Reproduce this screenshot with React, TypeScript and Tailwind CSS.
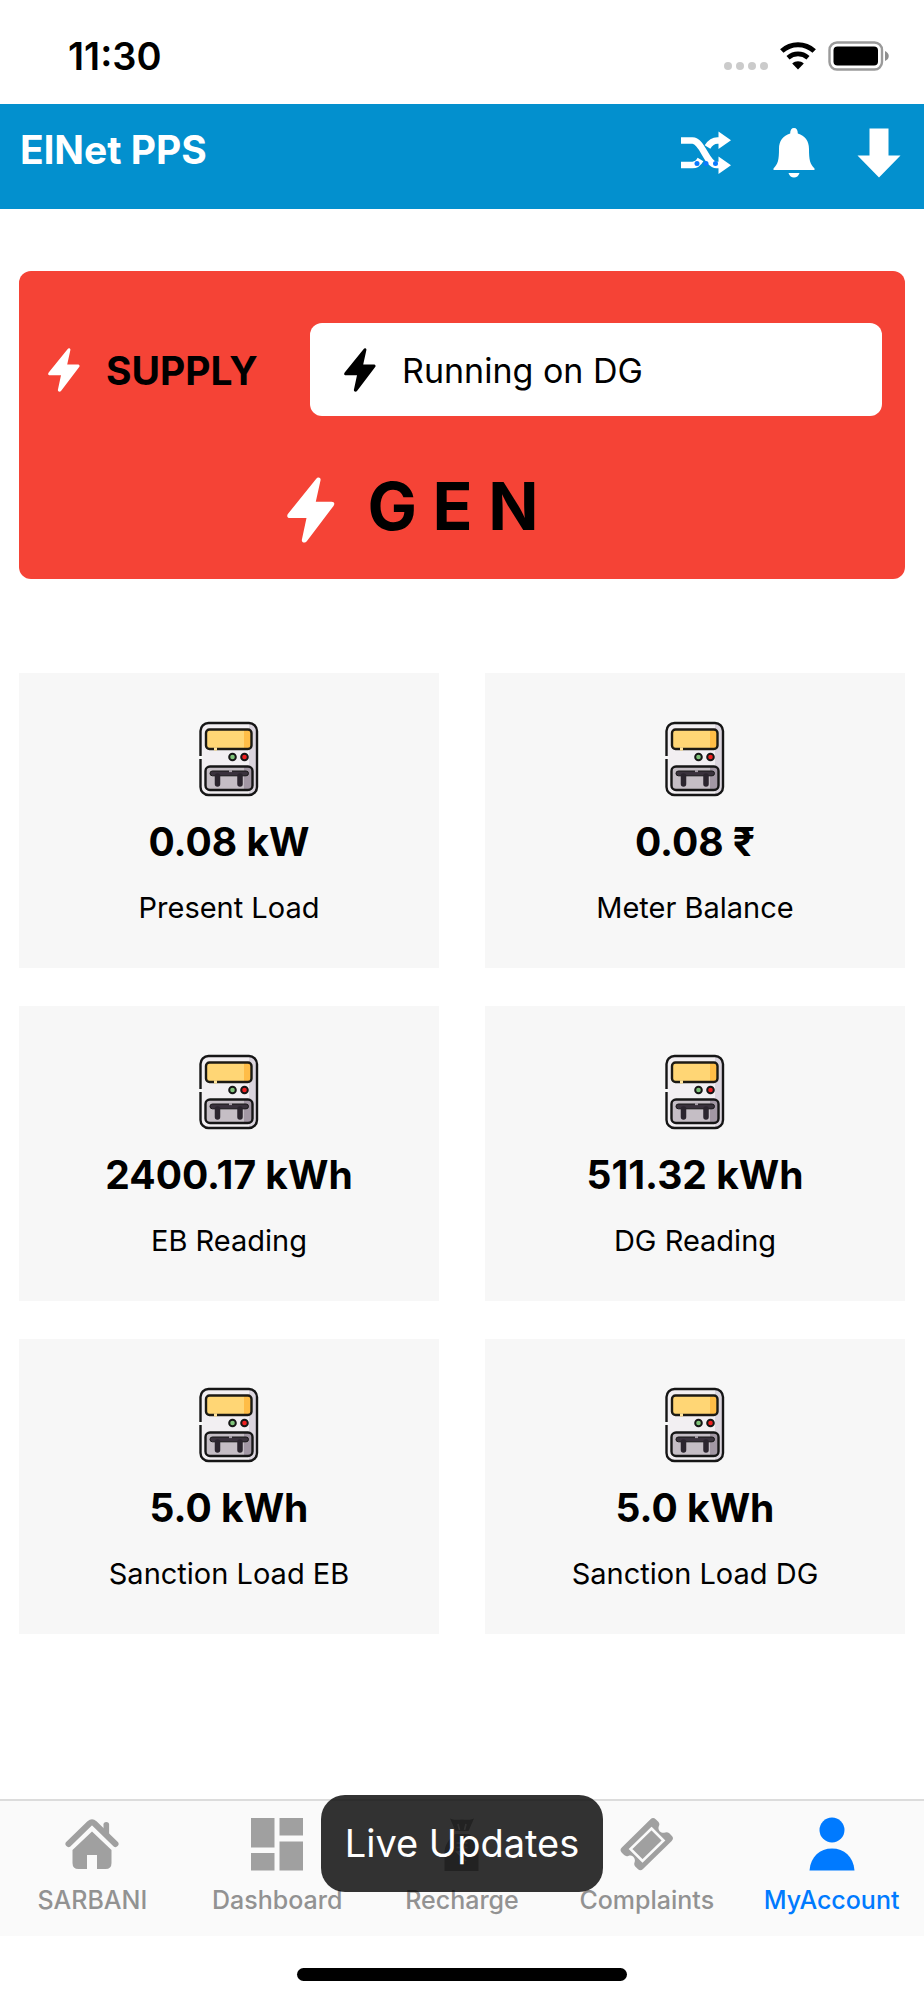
import React from "react";

function WifiIcon() {
  return (
    <svg viewBox="0 0 36 28" className="h-7 w-9" fill="none" stroke="#000" aria-hidden="true">
      <path d="M1.8 9C11 0.6 25 0.6 34.200 9" strokeWidth="5" />
      <path d="M8 15.800C14 10.600 22 10.600 28 15.800" strokeWidth="4.600" />
      <path d="M18 27.500l-5.800-6C15.500 18.600 20.500 18.600 23.800 21.500z" fill="#000" stroke="none" />
    </svg>
  );
}

function BatteryIcon() {
  return (
    <svg viewBox="0 0 62 30" className="h-[30px] w-[62px]" fill="none" aria-hidden="true">
      <rect x="1.500" y="1.500" width="52.500" height="27" rx="7.500" stroke="#9a9a9a" strokeWidth="2.400" />
      <rect x="5.500" y="5.500" width="44.500" height="19" rx="4" fill="#000" />
      <path d="M57 10c5 2 5 8 0 10z" fill="#8e8e8e" />
    </svg>
  );
}

function ShuffleIcon() {
  return (
    <svg viewBox="0 0 50 44" className="h-11 w-[50px]" aria-hidden="true">
      <g fill="none" stroke="#fff" strokeWidth="6.600">
        <path d="M0 9.500h11.500c10 0 14 24.500 24 24.500h4" />
        <path d="M26.500 16c2.500-4 5-6.500 10-6.500h3" />
        <path d="M0 34h11.500c3.500 0 6-2 8-5.500" />
      </g>
      <path d="M37.500 0.500v17.500l12.500-8.700z M37.500 25.500v17.500l12.500-8.700z" fill="#fff" />
      <g fill="#0a7aff">
        <circle cx="16" cy="32.500" r="2.500" />
        <circle cx="25" cy="32.500" r="2.500" />
        <circle cx="34.500" cy="32.500" r="2.500" />
      </g>
    </svg>
  );
}

function BellIcon() {
  return (
    <svg viewBox="0 0 42 50" className="h-[50px] w-[42px]" fill="#fff" aria-hidden="true">
      <path d="M21 0c2.600 0 3.800 2 3.800 5.500C32 7.500 36 13 36 21c0 11 1 15 5.500 19.500V42H0.500v-1.500C5 36 6 32 6 21c0-8 4-13.500 11.200-15.500C17.200 2 18.400 0 21 0z" />
      <path d="M15.500 45h11c-1 3-3 4.500-5.500 4.500s-4.500-1.500-5.500-4.500z" />
    </svg>
  );
}

function DownIcon() {
  return (
    <svg viewBox="0 0 44 50" className="h-[50px] w-11" fill="#fff" aria-hidden="true">
      <path d="M12.500 0.500h19V27.500H43.500L22 49.500 0.500 27.500h12z" />
    </svg>
  );
}

function BoltIcon({ className }: { className: string }) {
  return (
    <svg viewBox="0 0 32 44" className={className} fill="currentColor" aria-hidden="true">
      <path d="M19.500 1.200C20.500-.3 22.600.2 22.400 2L19.200 16.500h10.500c1.800 0 2.400 1.300 1.300 2.800L13.200 42.800c-1.200 1.500-3.600.9-3.300-1L13 27.300H2C.2 27.300-.4 26 .7 24.500z" />
    </svg>
  );
}

function MeterIcon() {
  return (
    <svg viewBox="0 0 60 76" className="h-[76px] w-[60px]" aria-hidden="true">
      <rect x="1.500" y="2" width="56.500" height="72" rx="8" fill="#f2eff2" />
      <path d="M50 2.500c5 0 8 3 8 8v55.500c0 4.500-3 7.500-8 7.500z" fill="#dbd5de" />
      <rect x="1.500" y="2" width="56.500" height="72" rx="8" fill="none" stroke="#161616" strokeWidth="2.400" />
      <path d="M0 36.500h4" stroke="#f7f7f7" strokeWidth="3" />
      <rect x="7" y="8.500" width="45.500" height="19.500" rx="3.500" fill="#ffd675" />
      <path d="M45 8.500h4a3.500 3.500 0 0 1 3.500 3.500v12.500a3.500 3.500 0 0 1-3.500 3.500h-4z" fill="#ffbd47" />
      <rect x="7" y="8.500" width="45.500" height="19.500" rx="3.500" fill="none" stroke="#1c1a14" strokeWidth="2.400" />
      <path d="M15 28h3" stroke="#ffe29a" strokeWidth="3.200" />
      <circle cx="33.500" cy="36" r="3.300" fill="#80c47a" stroke="#161616" strokeWidth="2" />
      <circle cx="45.500" cy="36" r="3.300" fill="#f02020" stroke="#161616" strokeWidth="2" />
      <rect x="6.500" y="45.500" width="47" height="23.500" rx="4.500" fill="#c5bec5" />
      <path d="M45 45.500h4a4.500 4.500 0 0 1 4.500 4.500v14.500a4.500 4.500 0 0 1-4.500 4.500h-4z" fill="#a297a4" />
      <rect x="6.500" y="45.500" width="47" height="23.500" rx="4.500" fill="none" stroke="#161616" strokeWidth="2.400" />
      <rect x="11" y="50" width="38.500" height="4.800" rx="2.400" fill="#3a323d" stroke="#161616" />
      <path d="M18.500 55v8M41 55v8" stroke="#2b252e" strokeWidth="5.500" strokeLinecap="round" />
      <path d="M30 50h3" stroke="#a59da6" strokeWidth="2.200" />
    </svg>
  );
}

function HomeIcon() {
  return (
    <svg viewBox="0 0 54 54" className="h-[54px] w-[54px]" fill="currentColor" aria-hidden="true">
      <path d="M3.500 27L24.500 6.500q2.500-2.200 5 0L50.500 27" fill="none" stroke="currentColor" strokeWidth="6" strokeLinecap="round" />
      <path d="M38.500 17V7.500q0-2.500 2.800-2.500t2.800 2.500V22z" />
      <path d="M27 14.500L46.500 33v13q0 6-6 6H32V38H22v14h-8.500q-6 0-6-6V33z" />
    </svg>
  );
}

function DashboardIcon() {
  return (
    <svg viewBox="0 0 54 54" className="h-[54px] w-[54px]" fill="currentColor" aria-hidden="true">
      <path d="M1 1h23.500v29.500H1z M29.500 1H53v17.500H29.500z M1 36h23.500v17.500H1z M29.500 24.500H53v29H29.500z" />
    </svg>
  );
}

function RechargeIcon() {
  return (
    <svg viewBox="0 0 54 54" className="h-[54px] w-[54px]" aria-hidden="true">
      <path d="M15 1.500c4 2 8 1 12 1s8 1 12-1L33.500 14h-13z" fill="currentColor" />
      <path d="M20 17h14c6 5 9.500 11 9.500 19v18h-34V36c0-8 4.500-14 10.500-19z" fill="currentColor" />
      <g fill="none" stroke="#fafafa" strokeWidth="1.600">
        <path d="M23 7l1.500 6M31 7l-1.500 6" />
        <path d="M21.500 26h11M21.500 30.500h11M22 26c10 0 10 9 0 9l9 9" />
      </g>
    </svg>
  );
}

function TicketIcon() {
  return (
    <svg viewBox="0 0 54 54" className="h-[54px] w-[54px]" aria-hidden="true">
      <path
        d="M30.500 2.200q2.600-2.400 5.200 0l2.600 2.600q1.800 2 .6 4.200c-1.800 3.800 2.200 8 6.200 6.500q2.200-1 4.200.8l2.400 2.400q2.600 2.600 0 5.200L23 52q-2.600 2.400-5.200 0l-2.600-2.600q-1.600-1.800-.6-4.200c1.500-4-2.500-8-6.300-6.300q-2.200 1-4.200-.8L1.800 35.700q-2.600-2.600 0-5.200z"
        fill="currentColor"
      />
      <path d="M31.500 11.500L43.500 23.500 22.500 44 10.500 32z" fill="none" stroke="#fafafa" strokeWidth="2.600" />
    </svg>
  );
}

function PersonIcon() {
  return (
    <svg viewBox="0 0 54 54" className="h-[54px] w-[54px]" fill="currentColor" aria-hidden="true">
      <circle cx="27" cy="13" r="12.500" />
      <path d="M4.500 53.500C5.500 39.500 15 31.500 27 31.500S48.500 39.500 49.500 53.500z" />
    </svg>
  );
}

const readings = [
  { value: "0.08 kW", label: "Present Load" },
  { value: "0.08 ₹", label: "Meter Balance" },
  { value: "2400.17 kWh", label: "EB Reading" },
  { value: "511.32 kWh", label: "DG Reading" },
  { value: "5.0 kWh", label: "Sanction Load EB" },
  { value: "5.0 kWh", label: "Sanction Load DG" },
];

const tabs = [
  { label: "SARBANI", Icon: HomeIcon, active: false },
  { label: "Dashboard", Icon: DashboardIcon, active: false },
  { label: "Recharge", Icon: RechargeIcon, active: false },
  { label: "Complaints", Icon: TicketIcon, active: false },
  { label: "MyAccount", Icon: PersonIcon, active: true },
];

export default function App() {
  return (
    <div className="flex min-h-screen flex-col bg-white font-['Inter','Noto_Sans',sans-serif] text-black">
      <div className="flex h-[104px] items-center justify-between pt-2 pr-[34px] pl-[68px]">
        <span className="text-[38px] leading-none font-semibold">11:30</span>
        <div className="flex items-center">
          <div className="mt-5 mr-3 flex gap-1">
            <span className="size-2 rounded-sm bg-[#cbcbcb]" />
            <span className="size-2 rounded-sm bg-[#cbcbcb]" />
            <span className="size-2 rounded-sm bg-[#cbcbcb]" />
            <span className="size-2 rounded-sm bg-[#cbcbcb]" />
          </div>
          <WifiIcon />
          <div className="ml-3">
            <BatteryIcon />
          </div>
        </div>
      </div>

      <header className="flex h-[105px] items-center justify-between bg-[#0390ce] pr-[23px] pb-2 pl-5 text-white">
        <h1 className="pb-1.5 text-[39px] leading-none font-bold">ElNet PPS</h1>
        <div className="flex items-center gap-[42px]">
          <button type="button" aria-label="Switch meter">
            <ShuffleIcon />
          </button>
          <button type="button" aria-label="Notifications">
            <BellIcon />
          </button>
          <button type="button" aria-label="Download">
            <DownIcon />
          </button>
        </div>
      </header>

      <main className="flex flex-1 flex-col px-[19px] pt-[62px]">
        <section className="rounded-xl bg-[#f54336] pt-[52px] pr-[23px] pb-9 pl-[29px]">
          <div className="flex items-center">
            <BoltIcon className="h-11 w-8 shrink-0 text-white" />
            <h2 className="ml-[26px] flex-none basis-[204px] pt-0.5 text-[39px] leading-none font-bold">SUPPLY</h2>
            <div className="flex h-[93px] flex-1 items-center gap-[26px] rounded-xl bg-white pl-[34px]">
              <BoltIcon className="h-11 w-8 shrink-0" />
              <span className="pt-0.5 text-[34px] leading-none">Running on DG</span>
            </div>
          </div>
          <div className="mt-[53px] flex items-end justify-center gap-8 pr-[104px]">
            <BoltIcon className="h-[66px] w-12 shrink-0 text-white" />
            <span className="text-[66px] leading-[74px] font-bold">G E N</span>
          </div>
        </section>

        <section className="mt-[94px] grid grid-cols-2 gap-x-[46px] gap-y-[38px]">
          {readings.map(({ value, label }) => (
            <article key={label} className="flex h-[295px] flex-col items-center bg-[#f7f7f7] pt-12">
              <MeterIcon />
              <p className="mt-[19px] text-[39px] leading-[52px] font-bold">{value}</p>
              <p className="mt-5 text-[29px] leading-10">{label}</p>
            </article>
          ))}
        </section>
      </main>

      <footer className="relative">
        <nav className="grid h-[137px] grid-cols-5 border-t-2 border-[#dcdcdc] bg-[#fafafa]">
          {tabs.map(({ label, Icon, active }) => (
            <a
              key={label}
              href="#"
              className={
                active
                  ? "flex flex-col items-center pt-4 text-[#007aff]"
                  : "flex flex-col items-center pt-4 text-[#a0a0a0]"
              }
            >
              <Icon />
              <span
                className={
                  active
                    ? "mt-3 text-[25px] leading-[34px] font-medium"
                    : "mt-3 text-[25px] leading-[34px] font-medium text-[#929292]"
                }
              >
                {label}
              </span>
            </a>
          ))}
        </nav>
        <div
          role="status"
          className="absolute -top-1 left-1/2 flex h-[97px] w-[282px] -translate-x-1/2 items-center justify-center rounded-3xl bg-[#060606]/82 text-[38px] whitespace-nowrap text-white"
        >
          Live Updates
        </div>
        <div className="flex h-16 justify-center pt-8">
          <div className="h-[13px] w-[330px] rounded-full bg-black" />
        </div>
      </footer>
    </div>
  );
}
